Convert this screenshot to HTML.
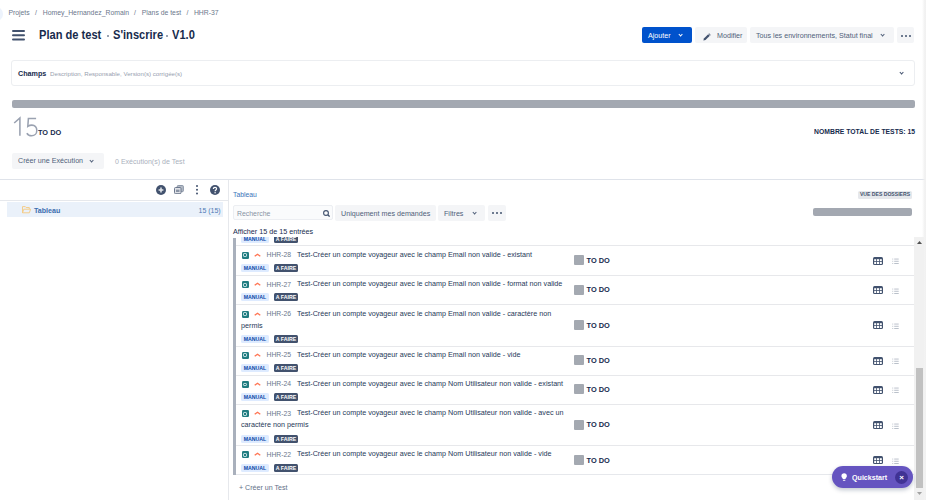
<!DOCTYPE html>
<html><head><meta charset="utf-8">
<style>
*{box-sizing:border-box;margin:0;padding:0}
html,body{width:926px;height:500px;overflow:hidden;background:#fff;font-family:"Liberation Sans",sans-serif;color:#172b4d}
.a{position:absolute;white-space:nowrap}
.bc{font-size:6.85px;color:#6b778c;top:8px;line-height:9px}
.title{top:28.3px;transform-origin:0 0;transform:scaleX(0.91);font-size:12.2px;font-weight:bold;line-height:15px;color:#172b4d}
.btn{position:absolute;height:16px;border-radius:2px;background:#f4f5f7;color:#505f79;font-size:7.15px;line-height:18.2px;white-space:nowrap}
.chev{display:inline-block;width:3.2px;height:3.2px;border-right:1.4px solid currentColor;border-bottom:1.4px solid currentColor;transform:rotate(45deg);position:absolute}
.dots{position:absolute;width:2px;height:2px;background:#42526e;border-radius:1px;box-shadow:4px 0 0 #42526e,8px 0 0 #42526e}
.hl{left:236px;width:678px;height:1px;background:#e7e8eb}
.tt{position:absolute;left:241px;width:326px;font-size:7.2px;line-height:12px;color:#253858;white-space:normal}
.ic{display:inline-block;position:relative;width:7px;height:7px;background:#217c80;border-radius:1.2px;vertical-align:-2px;margin-right:6px;left:0.5px}
.ic:after{content:"";position:absolute;left:1.5px;top:1.6px;width:4px;height:3.8px;border:0.9px solid #d5ecee;border-radius:1.2px;box-sizing:border-box}
.pr{display:inline-block;position:relative;width:7px;height:4px;margin:0 5.5px 0 0;vertical-align:0px}
.key{color:#6b778c;font-size:6.8px;margin-right:6px;position:relative;top:0.4px}
.bdg{position:absolute;height:8px;font-size:5.2px;font-weight:bold;line-height:8px;border-radius:1.5px;text-align:center}
.man{left:241px;width:28px;background:#deebff;color:#0747a6}
.faire{left:274px;width:24px;background:#42526e;color:#fff}
.st{position:absolute;left:574px;width:10px;height:10px;background:#a4a9b1;border-radius:1px}
.stt{position:absolute;left:586.6px;font-size:7.4px;font-weight:bold;line-height:10px;color:#172b4d}
.tbl{position:absolute;left:873px}
.lst{position:absolute;left:892px}
</style></head><body>
<!-- breadcrumb -->
<div class="a bc" style="left:8.4px">Projets</div><div class="a bc" style="left:35px">/</div><div class="a bc" style="left:42.7px">Homey_Hernandez_Romain</div><div class="a bc" style="left:134px">/</div><div class="a bc" style="left:141.7px">Plans de test</div><div class="a bc" style="left:186.4px">/</div><div class="a bc" style="left:193.9px">HHR-37</div>
<div class="a" style="left:-11px;top:7px;width:13.5px;height:13.5px;border-radius:50%;background:#edf3fc"></div>
<!-- hamburger -->
<div class="a" style="left:12px;top:29.5px;width:13px;height:2px;background:#42526e;box-shadow:0 4.2px 0 #42526e,0 8.4px 0 #42526e;border-radius:1px"></div>
<div class="a title" style="left:39px">Plan de test</div><div class="a" style="left:106.5px;top:35.4px;width:2.6px;height:1.3px;background:#9aa3b2"></div><div class="a title" style="left:112.8px">S'inscrire</div><div class="a" style="left:165.7px;top:35.4px;width:2.6px;height:1.3px;background:#9aa3b2"></div><div class="a title" style="left:172.2px">V1.0</div>

<div class="btn" style="left:642px;top:27px;width:50px;background:#0052cc;color:#fff;padding-left:6px">Ajouter<span class="chev" style="left:37px;top:6.0px"></span></div>
<div class="btn" style="left:695px;top:27px;width:52px;padding-left:22px">Modifier
 <svg class="a" style="left:7.5px;top:5.5px" width="8" height="8" viewBox="0 0 8 8"><path d="M0.4 7.6 L0.9 5.5 L5.2 1.2 L6.8 2.8 L2.5 7.1 Z" fill="#42526e"/><path d="M5.6 0.8 L6.1 0.3 L7.7 1.9 L7.2 2.4 Z" fill="#42526e"/></svg></div>
<div class="btn" style="left:750px;top:27px;width:144px;padding-left:6px">Tous les environnements, Statut final<span class="chev" style="left:130.5px;top:6.0px"></span></div>
<div class="btn" style="left:897px;top:27px;width:17px"><span class="dots" style="left:4px;top:8px"></span></div>

<!-- champs -->
<div class="a" style="left:11px;top:60px;width:904px;height:26px;border:1px solid #eceef1;border-radius:3px"></div>
<div class="a" style="left:18px;top:69px;font-size:7.2px;font-weight:bold;line-height:10px;color:#172b4d">Champs <span style="font-weight:normal;color:#97a0af;font-size:6.15px">&nbsp;Description, Responsable, Version(s) corrigée(s)</span></div>
<span class="chev a" style="left:900.3px;top:71.2px;color:#42526e;border-width:1.6px"></span>

<!-- progress -->
<div class="a" style="left:11.5px;top:100px;width:903.5px;height:8px;background:#a3a8b1;border-radius:2px"></div>
<svg class="a" style="left:10px;top:115px" width="30" height="23" viewBox="10 115 30 23"><path d="M14.2 123 L19.9 117.9 V135.8" fill="none" stroke="#9aa2b1" stroke-width="1.55"/><path d="M36.1 118.4 H28.4 L27.8 126.4 C29.1 125.5 30.5 125.1 31.9 125.1 C34.9 125.1 36.8 127.4 36.8 130.4 C36.8 133.6 34.6 135.8 31.6 135.8 C29.4 135.8 27.7 134.8 26.9 133.1" fill="none" stroke="#9aa2b1" stroke-width="1.55"/></svg>
<div class="a" style="left:38.4px;top:128px;font-size:8px;font-weight:bold;line-height:9px;color:#172b4d;transform-origin:0 0;transform:scaleX(0.92)">TO DO</div>
<div class="a" style="right:11px;top:127px;font-size:7.7px;font-weight:bold;line-height:10px;color:#172b4d;transform-origin:100% 0;transform:scaleX(0.885)">NOMBRE TOTAL DE TESTS: 15</div>

<div class="btn" style="left:12px;top:153px;width:92px;padding-left:6px;line-height:17.5px">Créer une Exécution<span class="chev" style="left:78px;top:6.0px"></span></div>
<div class="a" style="left:115px;top:156.7px;font-size:7.05px;line-height:10px;color:#aab1bd">0 Exécution(s) de Test</div>

<!-- lines -->
<div class="a" style="left:0;top:179px;width:925px;height:1px;background:#dfe3ea"></div>
<div class="a" style="left:228px;top:180px;width:1px;height:320px;background:#e6e8ec"></div>
<div class="a" style="left:0;top:200px;width:228px;height:1px;background:#e6e8ec"></div>
<div class="a" style="left:922px;top:0;width:4px;height:500px;background:linear-gradient(to right,rgba(240,240,240,0),#f0f0f0 75%,#f3f3f3)"></div>

<!-- left panel -->
<svg class="a" style="left:156px;top:185px" width="10" height="10" viewBox="0 0 10 10"><circle cx="5" cy="5" r="5" fill="#42526e"/><path d="M5 2.6 V7.4 M2.6 5 H7.4" stroke="#e4e7ec" stroke-width="1.5"/></svg>
<svg class="a" style="left:174px;top:185px" width="10" height="9" viewBox="0 0 10 9"><rect x="3.2" y="0.5" width="6.2" height="6.2" rx="1" fill="#b3bac5" stroke="#7a869a" stroke-width="0.8"/><rect x="0.5" y="2.5" width="6.5" height="6.2" rx="1" fill="#dfe1e6" stroke="#6b778c" stroke-width="1"/><rect x="2" y="4.6" width="3.5" height="2.4" fill="#8993a4"/></svg>
<div class="a" style="left:195.5px;top:185px;width:2px;height:2px;background:#42526e;border-radius:1px;box-shadow:0 3.7px 0 #42526e,0 7.4px 0 #42526e"></div>
<svg class="a" style="left:210px;top:185px" width="10" height="10" viewBox="0 0 10 10"><circle cx="5" cy="5" r="5" fill="#42526e"/><path d="M3.4 3.9 C3.4 2.9 4.1 2.3 5 2.3 C5.9 2.3 6.6 2.9 6.6 3.8 C6.6 4.9 5.1 5 5.1 6.2" fill="none" stroke="#fff" stroke-width="1.2"/><circle cx="5.1" cy="7.7" r="0.7" fill="#fff"/></svg>

<div class="a" style="left:7px;top:202px;width:216px;height:15px;background:#eaf1fa"></div>
<svg class="a" style="left:22px;top:206px" width="9" height="7.5" viewBox="0 0 9 7.5"><path d="M0.5 6.8 V0.6 H3.3 L4.1 1.5 H7.3 V3" fill="none" stroke="#f4cb86" stroke-width="0.95"/><path d="M0.5 6.8 L1.8 3.2 H8.6 L7.3 6.8 Z" fill="none" stroke="#f4cb86" stroke-width="0.95" stroke-linejoin="round"/></svg>
<div class="a" style="left:34px;top:205.8px;font-size:7.1px;font-weight:bold;line-height:10px;color:#3a6cae">Tableau</div>
<div class="a" style="left:198.5px;top:205.7px;font-size:7px;line-height:10px;color:#4f7bb5">15 (15)</div>

<!-- right panel toolbar -->
<div class="a" style="left:233px;top:190px;font-size:6.8px;line-height:9px;color:#3b73b9">Tableau</div>
<div class="a" style="left:858px;top:190.5px;width:54px;height:8px;background:#e6e8ec;border-radius:1.5px;font-size:5.1px;font-weight:bold;line-height:6.8px;color:#42526e;text-align:center">VUE DES DOSSIERS</div>
<div class="a" style="left:813px;top:208px;width:99px;height:8px;background:#a3a8b1;border-radius:2px"></div>

<div class="a" style="left:233px;top:205px;width:100px;height:15px;border:1px solid #eceef2;background:#fafbfc;border-radius:2px;font-size:6.9px;line-height:15px;color:#8993a4;padding-left:3px">Recherche
 <svg class="a" style="left:88.5px;top:3.5px" width="7" height="7" viewBox="0 0 7 7"><circle cx="3" cy="3" r="2.4" fill="none" stroke="#42526e" stroke-width="1.1"/><path d="M4.8 4.8 L6.6 6.6" stroke="#42526e" stroke-width="1.3"/></svg></div>
<div class="btn" style="left:335px;top:205px;width:101px;padding-left:6px;height:16px">Uniquement mes demandes</div>
<div class="btn" style="left:438px;top:205px;width:47px;padding-left:6px;height:16px">Filtres<span class="chev" style="left:35px;top:6.0px"></span></div>
<div class="btn" style="left:488px;top:205px;width:18px;height:16px"><span class="dots" style="left:4px;top:7px"></span></div>
<div class="a" style="left:233px;top:227px;font-size:7.2px;line-height:10px;color:#172b4d">Afficher 15 de 15 entrées</div>

<!-- table viewport -->
<div class="a" style="left:233px;top:237px;width:681px;height:8px;overflow:hidden"><div class="bdg man" style="left:8px;top:-2px;position:absolute">MANUAL</div><div class="bdg faire" style="left:41px;top:-2px;position:absolute">A FAIRE</div></div>
<div class="a hl" style="top:245px"></div>
<div class="tt" style="top:248.9px"><span class="ic"></span><svg class="pr" width="7" height="4" viewBox="0 0 7 4"><path d="M0.7 3.3 L3.5 1.2 L6.3 3.3" fill="none" stroke="#ff7452" stroke-width="1.3"/></svg><span class="key">HHR-28</span>Test-Créer un compte voyageur avec le champ Email non valide - existant</div>
<div class="bdg man" style="top:264.0px">MANUAL</div><div class="bdg faire" style="top:264.0px">A FAIRE</div>
<div class="st" style="top:255.2px"></div><div class="stt" style="top:255.89999999999998px">TO DO</div>
<svg class="tbl" style="top:256.7px" width="10" height="8" viewBox="0 0 10 8"><rect x="0" y="0" width="10" height="8" rx="1.5" fill="#42526e"/><g fill="#fff"><rect x="1.2" y="2.2" width="2" height="2"/><rect x="4" y="2.2" width="2" height="2"/><rect x="6.8" y="2.2" width="2" height="2"/><rect x="1.2" y="5" width="2" height="2"/><rect x="4" y="5" width="2" height="2"/><rect x="6.8" y="5" width="2" height="2"/></g></svg>
<svg class="lst" style="top:258.2px" width="7" height="7" viewBox="0 0 7 7"><g fill="#b3bac5"><rect x="0.3" y="0.6" width="0.9" height="0.9"/><rect x="0.3" y="2.8" width="0.9" height="0.9"/><rect x="0.3" y="5" width="0.9" height="0.9"/><rect x="2.2" y="0.6" width="4.5" height="0.9"/><rect x="2.2" y="2.8" width="4.5" height="0.9"/><rect x="2.2" y="5" width="4.5" height="0.9"/></g></svg>
<div class="a hl" style="top:275px"></div>
<div class="tt" style="top:278.4px"><span class="ic"></span><svg class="pr" width="7" height="4" viewBox="0 0 7 4"><path d="M0.7 3.3 L3.5 1.2 L6.3 3.3" fill="none" stroke="#ff7452" stroke-width="1.3"/></svg><span class="key">HHR-27</span>Test-Créer un compte voyageur avec le champ Email non valide - format non valide</div>
<div class="bdg man" style="top:293.4px">MANUAL</div><div class="bdg faire" style="top:293.4px">A FAIRE</div>
<div class="st" style="top:284.6px"></div><div class="stt" style="top:285.3px">TO DO</div>
<svg class="tbl" style="top:286.1px" width="10" height="8" viewBox="0 0 10 8"><rect x="0" y="0" width="10" height="8" rx="1.5" fill="#42526e"/><g fill="#fff"><rect x="1.2" y="2.2" width="2" height="2"/><rect x="4" y="2.2" width="2" height="2"/><rect x="6.8" y="2.2" width="2" height="2"/><rect x="1.2" y="5" width="2" height="2"/><rect x="4" y="5" width="2" height="2"/><rect x="6.8" y="5" width="2" height="2"/></g></svg>
<svg class="lst" style="top:287.6px" width="7" height="7" viewBox="0 0 7 7"><g fill="#b3bac5"><rect x="0.3" y="0.6" width="0.9" height="0.9"/><rect x="0.3" y="2.8" width="0.9" height="0.9"/><rect x="0.3" y="5" width="0.9" height="0.9"/><rect x="2.2" y="0.6" width="4.5" height="0.9"/><rect x="2.2" y="2.8" width="4.5" height="0.9"/><rect x="2.2" y="5" width="4.5" height="0.9"/></g></svg>
<div class="a hl" style="top:304px"></div>
<div class="tt" style="top:307.8px"><span class="ic"></span><svg class="pr" width="7" height="4" viewBox="0 0 7 4"><path d="M0.7 3.3 L3.5 1.2 L6.3 3.3" fill="none" stroke="#ff7452" stroke-width="1.3"/></svg><span class="key">HHR-26</span>Test-Créer un compte voyageur avec le champ Email non valide - caractère non permis</div>
<div class="bdg man" style="top:334.7px">MANUAL</div><div class="bdg faire" style="top:334.7px">A FAIRE</div>
<div class="st" style="top:319.8px"></div><div class="stt" style="top:320.5px">TO DO</div>
<svg class="tbl" style="top:321.3px" width="10" height="8" viewBox="0 0 10 8"><rect x="0" y="0" width="10" height="8" rx="1.5" fill="#42526e"/><g fill="#fff"><rect x="1.2" y="2.2" width="2" height="2"/><rect x="4" y="2.2" width="2" height="2"/><rect x="6.8" y="2.2" width="2" height="2"/><rect x="1.2" y="5" width="2" height="2"/><rect x="4" y="5" width="2" height="2"/><rect x="6.8" y="5" width="2" height="2"/></g></svg>
<svg class="lst" style="top:322.8px" width="7" height="7" viewBox="0 0 7 7"><g fill="#b3bac5"><rect x="0.3" y="0.6" width="0.9" height="0.9"/><rect x="0.3" y="2.8" width="0.9" height="0.9"/><rect x="0.3" y="5" width="0.9" height="0.9"/><rect x="2.2" y="0.6" width="4.5" height="0.9"/><rect x="2.2" y="2.8" width="4.5" height="0.9"/><rect x="2.2" y="5" width="4.5" height="0.9"/></g></svg>
<div class="a hl" style="top:346px"></div>
<div class="tt" style="top:348.8px"><span class="ic"></span><svg class="pr" width="7" height="4" viewBox="0 0 7 4"><path d="M0.7 3.3 L3.5 1.2 L6.3 3.3" fill="none" stroke="#ff7452" stroke-width="1.3"/></svg><span class="key">HHR-25</span>Test-Créer un compte voyageur avec le champ Email non valide - vide</div>
<div class="bdg man" style="top:364.1px">MANUAL</div><div class="bdg faire" style="top:364.1px">A FAIRE</div>
<div class="st" style="top:355.0px"></div><div class="stt" style="top:355.7px">TO DO</div>
<svg class="tbl" style="top:356.5px" width="10" height="8" viewBox="0 0 10 8"><rect x="0" y="0" width="10" height="8" rx="1.5" fill="#42526e"/><g fill="#fff"><rect x="1.2" y="2.2" width="2" height="2"/><rect x="4" y="2.2" width="2" height="2"/><rect x="6.8" y="2.2" width="2" height="2"/><rect x="1.2" y="5" width="2" height="2"/><rect x="4" y="5" width="2" height="2"/><rect x="6.8" y="5" width="2" height="2"/></g></svg>
<svg class="lst" style="top:358.0px" width="7" height="7" viewBox="0 0 7 7"><g fill="#b3bac5"><rect x="0.3" y="0.6" width="0.9" height="0.9"/><rect x="0.3" y="2.8" width="0.9" height="0.9"/><rect x="0.3" y="5" width="0.9" height="0.9"/><rect x="2.2" y="0.6" width="4.5" height="0.9"/><rect x="2.2" y="2.8" width="4.5" height="0.9"/><rect x="2.2" y="5" width="4.5" height="0.9"/></g></svg>
<div class="a hl" style="top:375px"></div>
<div class="tt" style="top:378.1px"><span class="ic"></span><svg class="pr" width="7" height="4" viewBox="0 0 7 4"><path d="M0.7 3.3 L3.5 1.2 L6.3 3.3" fill="none" stroke="#ff7452" stroke-width="1.3"/></svg><span class="key">HHR-24</span>Test-Créer un compte voyageur avec le champ Nom Utilisateur non valide - existant</div>
<div class="bdg man" style="top:393.2px">MANUAL</div><div class="bdg faire" style="top:393.2px">A FAIRE</div>
<div class="st" style="top:384.4px"></div><div class="stt" style="top:385.09999999999997px">TO DO</div>
<svg class="tbl" style="top:385.9px" width="10" height="8" viewBox="0 0 10 8"><rect x="0" y="0" width="10" height="8" rx="1.5" fill="#42526e"/><g fill="#fff"><rect x="1.2" y="2.2" width="2" height="2"/><rect x="4" y="2.2" width="2" height="2"/><rect x="6.8" y="2.2" width="2" height="2"/><rect x="1.2" y="5" width="2" height="2"/><rect x="4" y="5" width="2" height="2"/><rect x="6.8" y="5" width="2" height="2"/></g></svg>
<svg class="lst" style="top:387.4px" width="7" height="7" viewBox="0 0 7 7"><g fill="#b3bac5"><rect x="0.3" y="0.6" width="0.9" height="0.9"/><rect x="0.3" y="2.8" width="0.9" height="0.9"/><rect x="0.3" y="5" width="0.9" height="0.9"/><rect x="2.2" y="0.6" width="4.5" height="0.9"/><rect x="2.2" y="2.8" width="4.5" height="0.9"/><rect x="2.2" y="5" width="4.5" height="0.9"/></g></svg>
<div class="a hl" style="top:404px"></div>
<div class="tt" style="top:407.4px"><span class="ic"></span><svg class="pr" width="7" height="4" viewBox="0 0 7 4"><path d="M0.7 3.3 L3.5 1.2 L6.3 3.3" fill="none" stroke="#ff7452" stroke-width="1.3"/></svg><span class="key">HHR-23</span>Test-Créer un compte voyageur avec le champ Nom Utilisateur non valide - avec un caractère non permis</div>
<div class="bdg man" style="top:434.5px">MANUAL</div><div class="bdg faire" style="top:434.5px">A FAIRE</div>
<div class="st" style="top:419.6px"></div><div class="stt" style="top:420.3px">TO DO</div>
<svg class="tbl" style="top:421.1px" width="10" height="8" viewBox="0 0 10 8"><rect x="0" y="0" width="10" height="8" rx="1.5" fill="#42526e"/><g fill="#fff"><rect x="1.2" y="2.2" width="2" height="2"/><rect x="4" y="2.2" width="2" height="2"/><rect x="6.8" y="2.2" width="2" height="2"/><rect x="1.2" y="5" width="2" height="2"/><rect x="4" y="5" width="2" height="2"/><rect x="6.8" y="5" width="2" height="2"/></g></svg>
<svg class="lst" style="top:422.6px" width="7" height="7" viewBox="0 0 7 7"><g fill="#b3bac5"><rect x="0.3" y="0.6" width="0.9" height="0.9"/><rect x="0.3" y="2.8" width="0.9" height="0.9"/><rect x="0.3" y="5" width="0.9" height="0.9"/><rect x="2.2" y="0.6" width="4.5" height="0.9"/><rect x="2.2" y="2.8" width="4.5" height="0.9"/><rect x="2.2" y="5" width="4.5" height="0.9"/></g></svg>
<div class="a hl" style="top:445px"></div>
<div class="tt" style="top:448.4px"><span class="ic"></span><svg class="pr" width="7" height="4" viewBox="0 0 7 4"><path d="M0.7 3.3 L3.5 1.2 L6.3 3.3" fill="none" stroke="#ff7452" stroke-width="1.3"/></svg><span class="key">HHR-22</span>Test-Créer un compte voyageur avec le champ Nom Utilisateur non valide - vide</div>
<div class="bdg man" style="top:463.7px">MANUAL</div><div class="bdg faire" style="top:463.7px">A FAIRE</div>
<div class="st" style="top:454.8px"></div><div class="stt" style="top:455.5px">TO DO</div>
<svg class="tbl" style="top:456.3px" width="10" height="8" viewBox="0 0 10 8"><rect x="0" y="0" width="10" height="8" rx="1.5" fill="#42526e"/><g fill="#fff"><rect x="1.2" y="2.2" width="2" height="2"/><rect x="4" y="2.2" width="2" height="2"/><rect x="6.8" y="2.2" width="2" height="2"/><rect x="1.2" y="5" width="2" height="2"/><rect x="4" y="5" width="2" height="2"/><rect x="6.8" y="5" width="2" height="2"/></g></svg>
<svg class="lst" style="top:457.8px" width="7" height="7" viewBox="0 0 7 7"><g fill="#b3bac5"><rect x="0.3" y="0.6" width="0.9" height="0.9"/><rect x="0.3" y="2.8" width="0.9" height="0.9"/><rect x="0.3" y="5" width="0.9" height="0.9"/><rect x="2.2" y="0.6" width="4.5" height="0.9"/><rect x="2.2" y="2.8" width="4.5" height="0.9"/><rect x="2.2" y="5" width="4.5" height="0.9"/></g></svg>
<div class="a" style="top:474px;left:233px;width:681px;height:1px;background:#e6e8ec"></div>
<div class="a" style="top:238px;left:233px;width:3px;height:237px;background:#a9b0bc"></div>
<div class="a" style="left:239px;top:482.8px;font-size:7.1px;line-height:10px;color:#637089">+ Créer un Test</div>

<!-- scrollbar -->
<div class="a" style="left:914px;top:237px;width:10px;height:263px;background:#f1f1f1"></div>
<div class="a" style="left:916px;top:368px;width:7px;height:120px;background:#c1c1c1"></div>
<svg class="a" style="left:917px;top:241px" width="5" height="3" viewBox="0 0 5 3"><path d="M0 3 L2.5 0 L5 3 Z" fill="#505050"/></svg>
<svg class="a" style="left:917px;top:492px" width="5" height="3" viewBox="0 0 5 3"><path d="M0 0 L2.5 3 L5 0 Z" fill="#a3a3a3"/></svg>

<!-- quickstart -->
<div class="a" style="left:832px;top:466px;width:81px;height:22px;border-radius:11px;background:#6554c0;box-shadow:0 2px 4px rgba(9,30,66,.25)"></div>
<div class="a" style="left:852px;top:472.7px;font-size:8px;font-weight:bold;line-height:10px;color:#fff;transform-origin:0 0;transform:scaleX(0.89)">Quickstart</div>
<svg class="a" style="left:840.5px;top:473px" width="6.3" height="8.5" viewBox="0 0 7 10"><path d="M3.5 0.3 C1.6 0.3 0.3 1.7 0.3 3.4 C0.3 4.6 1 5.3 1.6 6 L1.8 7 H5.2 L5.4 6 C6 5.3 6.7 4.6 6.7 3.4 C6.7 1.7 5.4 0.3 3.5 0.3 Z" fill="#fff"/><rect x="2" y="7.8" width="3" height="1.2" rx="0.5" fill="#fff"/></svg>
<div class="a" style="left:895px;top:471px;width:13px;height:13px;border-radius:50%;background:#403294;color:#fff;font-size:8px;font-weight:bold;line-height:13px;text-align:center">×</div>
</body></html>
